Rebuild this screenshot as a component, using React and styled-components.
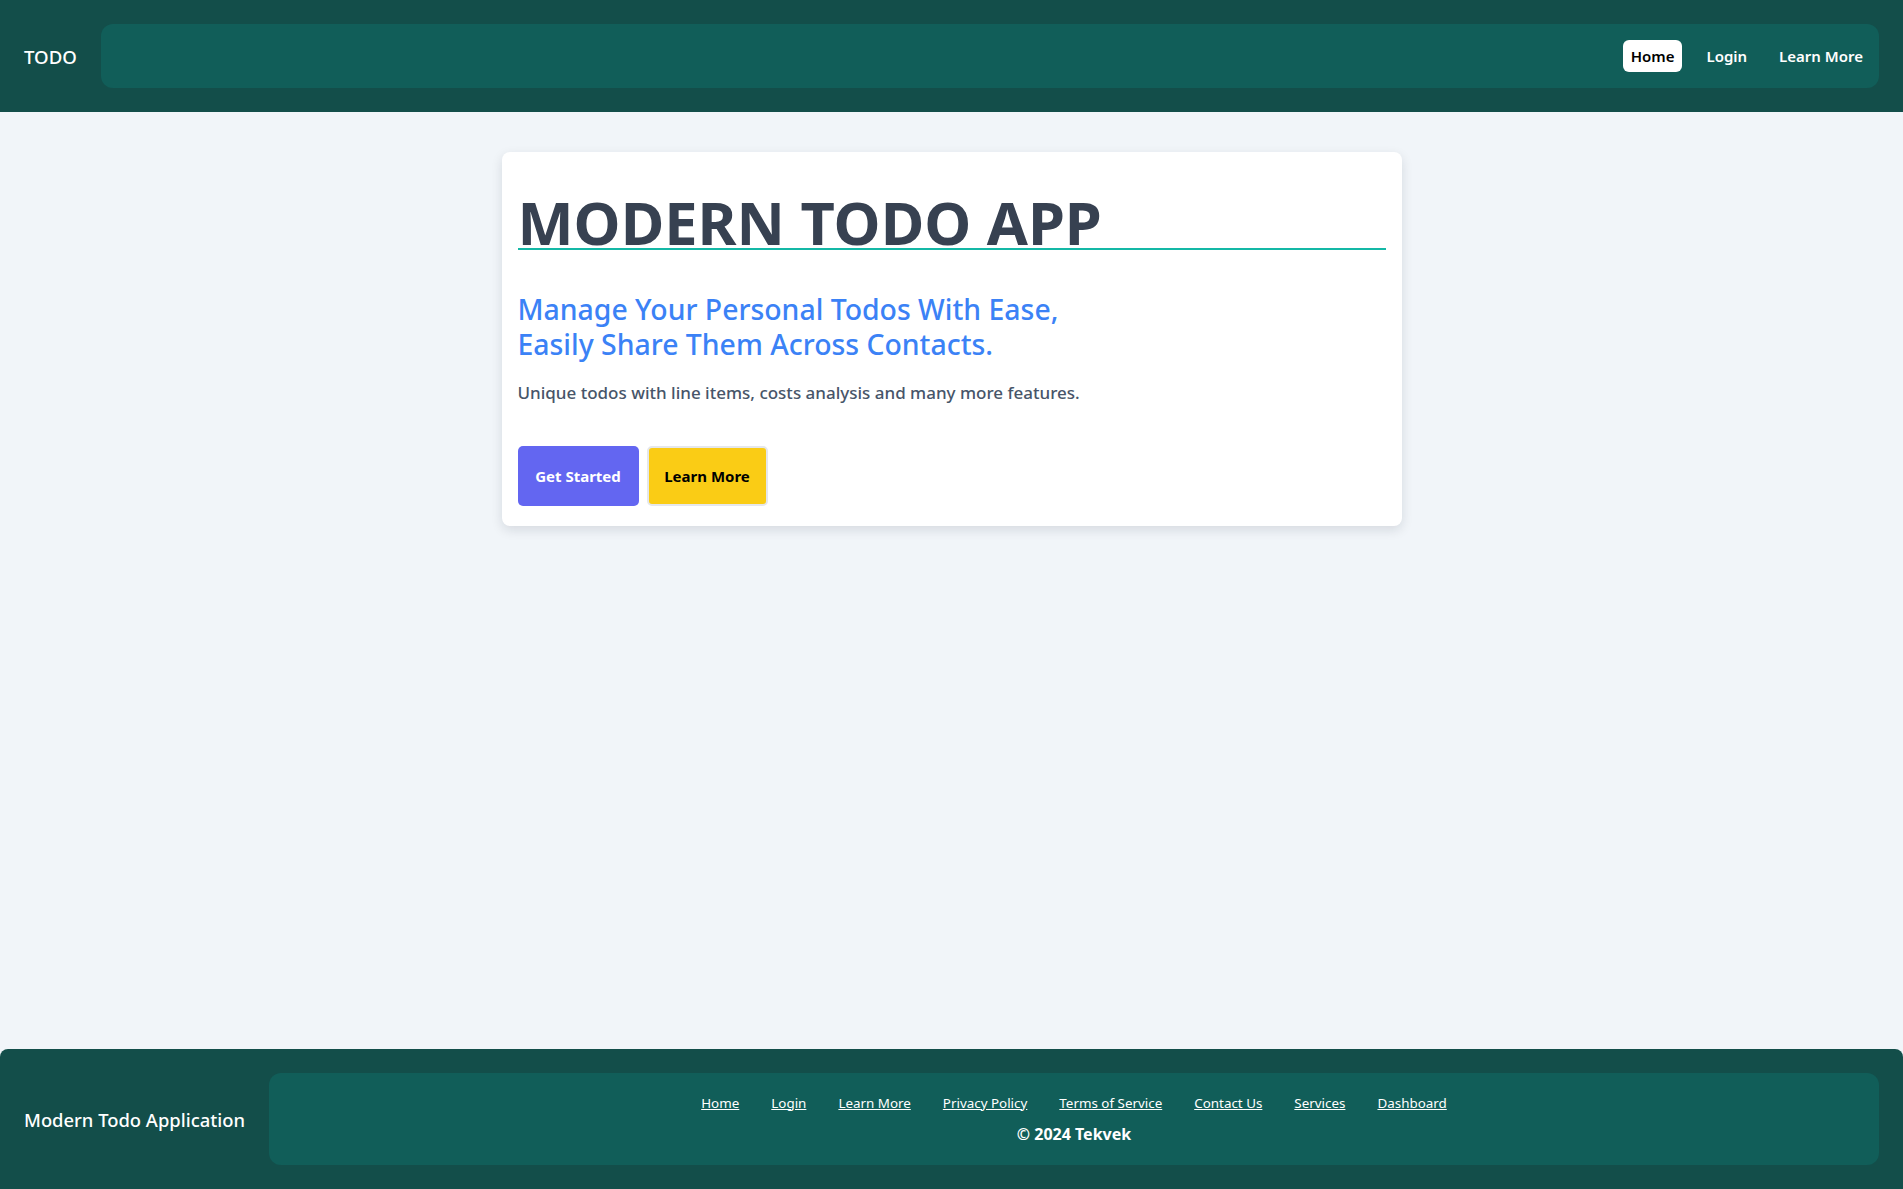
import { styled, createGlobalStyle } from "styled-components";

const GlobalStyle = createGlobalStyle`
  * {
    box-sizing: border-box;
  }
  body {
    margin: 0;
    background-color: #f1f5f9;
    font-family: "Noto Sans", "Open Sans", sans-serif;
  }
`;

const navLinks = ["Home", "Login", "Learn More"];
const footerLinks = [
  "Home",
  "Login",
  "Learn More",
  "Privacy Policy",
  "Terms of Service",
  "Contact Us",
  "Services",
  "Dashboard",
];

const App = () => {
  return (
    <>
      <GlobalStyle />
      <Page>
        <Header>
          <Logo>TODO</Logo>
          <NavPanel>
            {navLinks.map((link) => (
              <NavItem key={link} $active={link === "Home"}>
                {link}
              </NavItem>
            ))}
          </NavPanel>
        </Header>
        <Main>
          <HeroCard>
            <Title>MODERN TODO APP</Title>
            <Subtitle>
              Manage Your Personal Todos With Ease,
              <br />
              Easily Share Them Across Contacts.
            </Subtitle>
            <Description>
              Unique todos with line items, costs analysis and many more
              features.
            </Description>
            <ButtonRow>
              <PrimaryButton>Get Started</PrimaryButton>
              <SecondaryButton>Learn More</SecondaryButton>
            </ButtonRow>
          </HeroCard>
        </Main>
        <Footer>
          <FooterBrand>Modern Todo Application</FooterBrand>
          <FooterPanel>
            <FooterLinks>
              {footerLinks.map((link) => (
                <FooterLink key={link} href="#">
                  {link}
                </FooterLink>
              ))}
            </FooterLinks>
            <Copyright>© 2024 Tekvek</Copyright>
          </FooterPanel>
        </Footer>
      </Page>
    </>
  );
};

export default App;

const Page = styled.div`
  min-height: 100vh;
  display: flex;
  flex-direction: column;
`;

const Header = styled.header`
  display: flex;
  align-items: center;
  gap: 24px;
  height: 112px;
  padding: 24px;
  background-color: #134e4a;
`;

const Logo = styled.div`
  color: #ffffff;
  font-size: 18.6px;
  font-weight: 500;
`;

const NavPanel = styled.nav`
  flex: 1;
  height: 64px;
  display: flex;
  justify-content: flex-end;
  align-items: center;
  gap: 16px;
  padding: 0 8px;
  background-color: #115e59;
  border-radius: 12px;
`;

const NavItem = styled.a`
  height: 32px;
  display: flex;
  align-items: center;
  padding: 0 8px;
  border-radius: 6px;
  font-size: 15px;
  font-weight: 600;
  color: ${({ $active }) => ($active ? "#000000" : "#ffffff")};
  background-color: ${({ $active }) => ($active ? "#ffffff" : "transparent")};
  cursor: pointer;
`;

const Main = styled.main`
  flex: 1;
  padding-top: 40px;
`;

const HeroCard = styled.section`
  width: 900px;
  margin: 0 auto;
  padding: 16px 16px 20px;
  background-color: #ffffff;
  border-radius: 8px;
  box-shadow: 0 4px 12px rgba(15, 23, 42, 0.12);
`;

const Title = styled.h1`
  margin: 28px 0 0;
  font-size: 59.5px;
  font-weight: 700;
  line-height: 52px;
  color: #374151;
  border-bottom: 2px solid #14b8a6;
`;

const Subtitle = styled.h2`
  margin: 42px 0 0;
  font-size: 28.4px;
  font-weight: 500;
  line-height: 35px;
  color: #3b82f6;
`;

const Description = styled.p`
  margin: 18px 0 0;
  font-size: 17px;
  font-weight: 500;
  line-height: 26px;
  color: #475569;
`;

const ButtonRow = styled.div`
  display: flex;
  gap: 8px;
  margin-top: 40px;
`;

const PrimaryButton = styled.button`
  width: 121px;
  height: 60px;
  border: none;
  border-radius: 5px;
  background-color: #6366f1;
  color: #ffffff;
  font-family: inherit;
  font-size: 15px;
  font-weight: 700;
  cursor: pointer;
`;

const SecondaryButton = styled(PrimaryButton)`
  border: 2px solid #e5e7eb;
  background-color: #facc15;
  color: #000000;
`;

const Footer = styled.footer`
  display: flex;
  align-items: center;
  gap: 24px;
  height: 140px;
  padding: 24px;
  background-color: #134e4a;
  border-radius: 8px 8px 0 0;
`;

const FooterBrand = styled.div`
  color: #ffffff;
  font-size: 18.4px;
  font-weight: 500;
`;

const FooterPanel = styled.div`
  flex: 1;
  height: 92px;
  display: flex;
  flex-direction: column;
  align-items: center;
  justify-content: center;
  gap: 11px;
  background-color: #115e59;
  border-radius: 12px;
`;

const FooterLinks = styled.div`
  display: flex;
  gap: 32px;
`;

const FooterLink = styled.a`
  color: #ffffff;
  font-size: 13.4px;
  text-decoration: underline;
`;

const Copyright = styled.div`
  color: #ffffff;
  font-size: 16px;
  font-weight: 700;
`;
